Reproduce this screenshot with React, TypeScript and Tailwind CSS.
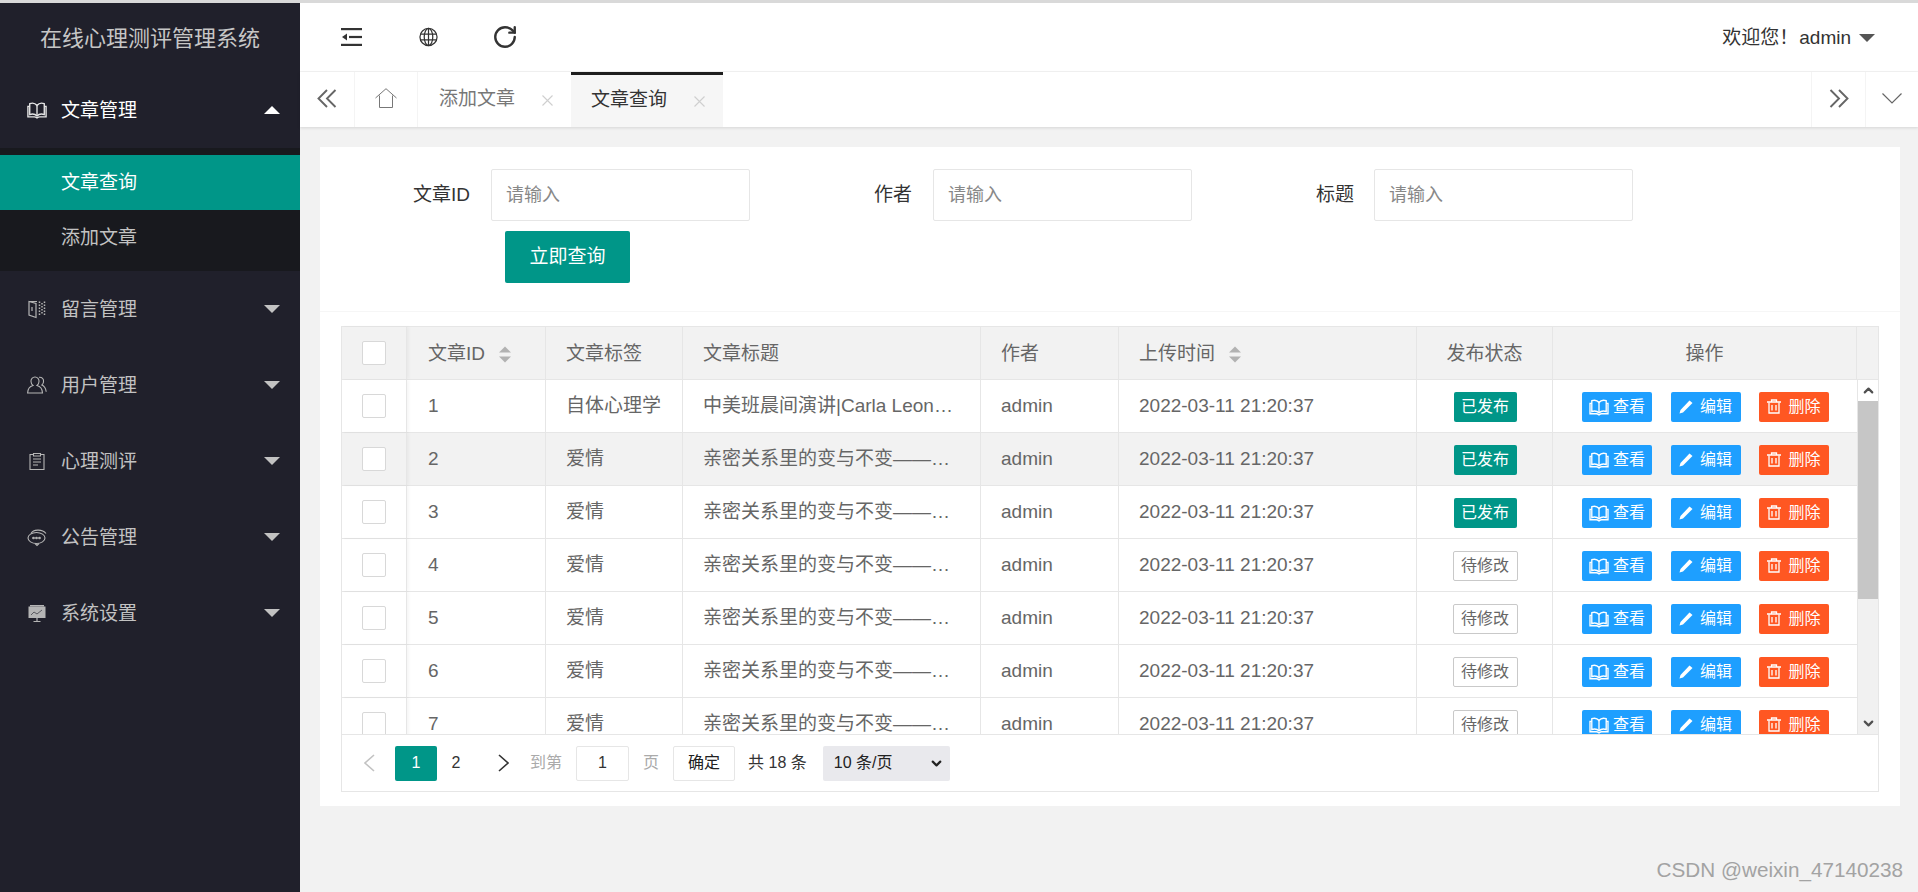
import React from "react";
import { ChevronDown, ChevronUp, RotateCw } from "lucide-react";

type IC = { className?: string };

const Tri = ({ up, cls }: { up?: boolean; cls: string }) => (
  <svg viewBox="0 0 16 8" className={cls}>
    <polygon points={up ? "8,0 16,8 0,8" : "0,0 16,0 8,8"} fill="currentColor" />
  </svg>
);

const Book = ({ className }: IC) => (
  <svg viewBox="0 0 22 20" fill="none" stroke="currentColor" strokeWidth="1.5" className={className}>
    <path d="M11 5C9 2.5 6 2 3 3v12c3-1 6-.5 8 1.5 2-2 5-2.5 8-1.5V3c-3-1-6-.5-8 2z" />
    <path d="M11 5v11.5" />
    <path d="M3 6H1v11.5h7c1 0 2 .5 3 1.2 1-.7 2-1.2 3-1.2h7V6h-2" />
  </svg>
);

const Chat = ({ className }: IC) => (
  <svg viewBox="0 0 20 20" fill="none" stroke="currentColor" strokeWidth="1.1" className={className}>
    <path d="M4 6.5C6 2.5 15 1.5 19 6.5" />
    <ellipse cx="9.5" cy="11" rx="8.5" ry="5.5" />
    <path d="M8 16.5l2 2 2-2" />
    <circle cx="6.5" cy="11" r=".8" fill="currentColor" />
    <circle cx="9.5" cy="11" r=".8" fill="currentColor" />
    <circle cx="12.5" cy="11" r=".8" fill="currentColor" />
  </svg>
);

const Door = ({ className }: IC) => (
  <svg viewBox="0 0 20 20" fill="none" stroke="currentColor" strokeWidth="1.2" className={className}>
    <path d="M2 2.5l7 2v14l-7-2.5z" />
    <path d="M2 2.5h8M5 8v4" />
    <path d="M12.5 2.5v14M15 4v11M17.5 2.5v14" strokeDasharray="1.6 1.4" strokeWidth="1.5" />
  </svg>
);

const UserIcon = ({ className }: IC) => (
  <svg viewBox="0 0 20 20" fill="none" stroke="currentColor" strokeWidth="1.1" className={className}>
    <path d="M8 2a4 4 0 0 1 4 4.5c0 1.8-.8 3-2 4 3.3.8 5.3 3 5.5 7.5H.6c.2-4.500 2.200-6.700 5.400-7.500-1.200-1-2-2.200-2-4A4 4 0 0 1 8 2z" />
    <path d="M12 2.300c3-.3 5 1.700 4.500 4.700-.2 1.300-.8 2.300-1.600 3 2.400 1 3.900 3.300 4.300 6.800" />
  </svg>
);

const Clip = ({ className }: IC) => (
  <svg viewBox="0 0 20 20" fill="none" stroke="currentColor" strokeWidth="1.1" className={className}>
    <path d="M6.500 3.500H3v15h14v-15h-3.500" />
    <path d="M6.500 2.500h7v2.500h-7z" />
    <path d="M6 8h8M6 11h8M6 14h5" />
  </svg>
);

const Board = ({ className }: IC) => (
  <svg viewBox="0 0 20 20" className={className}>
    <rect x="1.500" y="3.500" width="17" height="11.500" fill="currentColor" />
    <rect x="3" y="2" width="14" height="1.500" fill="currentColor" />
    <path d="M4 12l3-3 3 2 5-4" fill="none" stroke="#5a5a60" strokeWidth="1" />
    <path d="M10 15v3M6.500 18.500h7" stroke="currentColor" strokeWidth="1.200" />
  </svg>
);

const Double = ({ right, cls }: { right?: boolean; cls: string }) => (
  <svg viewBox="0 0 20 19" fill="none" stroke="currentColor" strokeWidth="1.900" className={cls}>
    {right ? <path d="M1.500 1l8.500 8.500L1.500 18M10 1l8.500 8.500L10 18" /> : <path d="M18.500 1L10 9.500 18.500 18M10 1L1.500 9.500 10 18" />}
  </svg>
);

const Single = ({ right, cls }: { right?: boolean; cls: string }) => (
  <svg viewBox="0 0 11 18" fill="none" stroke="currentColor" strokeWidth="1.600" className={cls}>
    {right ? <path d="M1 1l9 8-9 8" /> : <path d="M10 1L1 9l9 8" />}
  </svg>
);

const Cross = () => (
  <svg viewBox="0 0 11 11" fill="none" stroke="#cfcfcf" strokeWidth="1.100" className="w-[11px] h-[11px]">
    <path d="M.5.5l10 10M10.500.5l-10 10" />
  </svg>
);

const Pen = () => (
  <svg viewBox="0 0 14 14" className="w-[14px] h-[14px]" fill="currentColor">
    <polygon points="10.500,0.500 13.500,3 4,12.500 0.500,13.500 1.500,10" />
  </svg>
);

const Trash = () => (
  <svg viewBox="0 0 14 15" fill="none" stroke="currentColor" strokeWidth="1.300" className="w-[14px] h-[15px]">
    <path d="M0 3h14M4.500 3V1h5v2" />
    <path d="M2 3.500V14h10V3.500" />
    <path d="M5 6v5.500M9 6v5.500" />
  </svg>
);

const menus = [
  { t: "留言管理", I: Door },
  { t: "用户管理", I: UserIcon },
  { t: "心理测评", I: Clip },
  { t: "公告管理", I: Chat },
  { t: "系统设置", I: Board },
];

const love = "亲密关系里的变与不变——…";
const rows = [
  ["1", "自体心理学", "中美班晨间演讲|Carla Leon…", true],
  ["2", "爱情", love, true],
  ["3", "爱情", love, true],
  ["4", "爱情", love, false],
  ["5", "爱情", love, false],
  ["6", "爱情", love, false],
  ["7", "爱情", love, false],
] as [string, string, string, boolean][];

const Sort = () => (
  <span className="ml-[14px] flex flex-col gap-[3px] text-[#b2b2b2]">
    <Tri up cls="w-[12px] h-[7px]" />
    <Tri cls="w-[12px] h-[7px]" />
  </span>
);

const Check = () => <span className="block w-[24px] h-[24px] bg-white border border-[#d8d8d8] rounded-[2px]" />;

const inputCls = "w-[259px] h-[52px] border border-[#e6e6e6] rounded-[2px] pl-[14px] flex items-center text-[18px] text-[#888]";

export default function App() {
  return (
    <div
      className="relative w-full h-screen overflow-hidden flex flex-col bg-[#f2f2f2] border-t-[3px] border-[#d9d9d9] text-[19px] text-[#666]"
      style={{ fontFamily: '"Liberation Sans","Noto Sans CJK SC",sans-serif' }}
    >
      <div className="flex flex-1 min-h-0">
        {/* Sidebar */}
        <aside className="w-[300px] shrink-0 bg-[#20202b] text-[#c2c2c2]">
          <div className="h-[69px] pt-[2px] flex items-center justify-center text-[22px] text-[#c6c6c6]">在线心理测评管理系统</div>
          <div className="h-[76px] flex items-center text-white">
            <Book className="ml-[27px] w-[20px] h-[20px] text-[#e6e6e6]" />
            <span className="ml-[14px] pt-[2px] flex-1">文章管理</span>
            <Tri up cls="w-[16px] h-[8px] mr-[20px] text-white" />
          </div>
          <div className="bg-[#18191e] pt-[7px] pb-[6px]">
            <div className="h-[55px] pt-[2px] bg-[#009688] text-white flex items-center pl-[61px]">文章查询</div>
            <div className="h-[55px] pt-[2px] flex items-center pl-[61px]">添加文章</div>
          </div>
          {menus.map(({ t, I }) => (
            <div key={t} className="h-[76px] flex items-center">
              <I className="ml-[27px] w-[20px] h-[20px] text-[#b5b5b5]" />
              <span className="ml-[14px] pt-[2px] flex-1">{t}</span>
              <Tri cls="w-[16px] h-[8px] mr-[20px] text-[#c2c2c2]" />
            </div>
          ))}
        </aside>

        {/* Main */}
        <main className="flex-1 min-w-0 flex flex-col">
          <header className="h-[69px] bg-white border-b border-[#f4f4f4] flex items-center text-[#333]">
            <svg viewBox="0 0 21 18" className="ml-[41px] w-[21px] h-[18px]" fill="#333">
              <rect x="0" y="0" width="21" height="2.200" />
              <rect x="8" y="7.900" width="13" height="2.200" />
              <polygon points="1,9 6,5.500 6,12.500" />
              <rect x="0" y="15.800" width="21" height="2.200" />
            </svg>
            <svg viewBox="0 0 20 20" className="ml-[57px] w-[19px] h-[20px]" fill="none" stroke="#333" strokeWidth="1.300">
              <circle cx="10" cy="10" r="9" />
              <ellipse cx="10" cy="10" rx="4.500" ry="9" />
              <path d="M10 1v18M1.500 7h17M1.500 13h17" />
            </svg>
            <RotateCw className="ml-[54px] w-[26px] h-[26px]" strokeWidth={2.2} />
            <div className="ml-auto flex items-center mr-[43px] pt-[2px]">
              <span>欢迎您！</span>
              <span className="ml-[1px]">admin</span>
              <Tri cls="ml-[8px] w-[16px] h-[8px] text-[#555]" />
            </div>
          </header>
          <nav className="h-[55px] bg-white shadow-[0_1px_3px_rgba(0,0,0,0.12)] flex items-stretch">
            <div className="w-[55px] border-r border-[#f4f4f4] flex items-center justify-center text-[#666] pb-[2px]">
              <Double cls="w-[20px] h-[19px]" />
            </div>
            <div className="w-[63px] border-r border-[#f4f4f4] flex items-center justify-center text-[#777] pb-[3px]">
              <svg viewBox="0 0 22 20" fill="none" stroke="currentColor" strokeWidth="1" className="w-[22px] h-[20px]">
                <path d="M.5 10L11 .7 21.500 10" />
                <path d="M4.500 7.500V19.500h13V7.500" />
              </svg>
            </div>
            <div className="w-[153px] flex items-center pl-[21px] text-[#777]">
              <span>添加文章</span>
              <span className="ml-[27px] mt-[1px]"><Cross /></span>
            </div>
            <div className="w-[152px] flex items-center pl-[20px] bg-[#f6f6f6] border-t-[3px] border-[#1e1e1e] text-[#333]">
              <span className="-mt-[2px]">文章查询</span>
              <span className="ml-[27px]"><Cross /></span>
            </div>
            <div className="ml-auto w-[54px] border-l border-[#f4f4f4] flex items-center justify-center text-[#666] pb-[2px]">
              <Double right cls="w-[20px] h-[19px]" />
            </div>
            <div className="w-[53px] border-l border-[#f4f4f4] flex items-center justify-center text-[#666] pb-[2px]">
              <svg viewBox="0 0 20 11" fill="none" stroke="currentColor" strokeWidth="1.200" className="w-[20px] h-[11px]">
                <path d="M.5.5L10 10 19.500.5" />
              </svg>
            </div>
          </nav>

          <div className="pt-[20px] pl-[20px] pr-[18px]">
            <section className="bg-white h-[659px] flex flex-col">
              <div className="h-[165px] border-b border-[#f6f6f6] pt-[22px]">
                <div className="flex items-center text-[#333]">
                  <label className="w-[150px] text-right mr-[21px]">文章ID</label>
                  <div className={inputCls}>请输入</div>
                  <label className="w-[162px] text-right mr-[21px]">作者</label>
                  <div className={inputCls}>请输入</div>
                  <label className="w-[162px] text-right mr-[20px]">标题</label>
                  <div className={inputCls}>请输入</div>
                </div>
                <button className="ml-[185px] mt-[10px] w-[125px] h-[52px] bg-[#009688] rounded-[2px] text-white text-[19px]">立即查询</button>
              </div>

              <div className="ml-[21px] mt-[14px] w-[1538px] h-[466px] border border-[#e6e6e6] flex flex-col">
                {/* header */}
                <div className="h-[53px] pt-0 shrink-0 flex bg-[#f2f2f2] border-b border-[#e6e6e6]">
                  <div className="w-[65px] border-r border-[#e6e6e6] flex items-center justify-center shadow-[2px_0_3px_rgba(0,0,0,0.04)]"><Check /></div>
                  <div className="w-[139px] border-r border-[#e6e6e6] flex items-center pl-[21px] pt-[2px]">文章ID<Sort /></div>
                  <div className="w-[137px] border-r border-[#e6e6e6] flex items-center pl-[20px] pt-[2px]">文章标签</div>
                  <div className="w-[298px] border-r border-[#e6e6e6] flex items-center pl-[20px] pt-[2px]">文章标题</div>
                  <div className="w-[138px] border-r border-[#e6e6e6] flex items-center pl-[20px] pt-[2px]">作者</div>
                  <div className="w-[298px] border-r border-[#e6e6e6] flex items-center pl-[20px] pt-[2px]">上传时间<Sort /></div>
                  <div className="w-[136px] border-r border-[#e6e6e6] flex items-center justify-center pt-[2px]">发布状态</div>
                  <div className="w-[304px] border-r border-[#e6e6e6] flex items-center justify-center pt-[2px]">操作</div>
                  <div className="flex-1" />
                </div>
                {/* body */}
                <div className="h-[354px] shrink-0 flex overflow-hidden">
                  <div className="w-[1515px] shrink-0">
                    {rows.map(([id, tag, title, pub], i) => (
                      <div key={id} className={`h-[53px] flex border-b border-[#e6e6e6] ${i === 1 ? "bg-[#f2f2f2]" : "bg-white"}`}>
                        <div className="w-[65px] border-r border-[#e6e6e6] flex items-center justify-center shadow-[2px_0_3px_rgba(0,0,0,0.04)]"><Check /></div>
                        <div className="w-[139px] border-r border-[#e6e6e6] flex items-center pl-[21px]">{id}</div>
                        <div className="w-[137px] border-r border-[#e6e6e6] flex items-center pl-[20px] whitespace-nowrap">{tag}</div>
                        <div className="w-[298px] border-r border-[#e6e6e6] flex items-center pl-[20px] whitespace-nowrap">{title}</div>
                        <div className="w-[138px] border-r border-[#e6e6e6] flex items-center pl-[20px]">admin</div>
                        <div className="w-[298px] border-r border-[#e6e6e6] flex items-center pl-[20px] whitespace-nowrap">2022-03-11 21:20:37</div>
                        <div className="w-[136px] border-r border-[#e6e6e6] pt-[1px] pl-[1px] flex items-center justify-center">
                          {pub ? (
                            <span className="w-[63px] h-[30px] bg-[#009688] text-white text-[16px] rounded-[2px] flex items-center justify-center">已发布</span>
                          ) : (
                            <span className="w-[65px] h-[30px] bg-white border border-[#c9c9c9] text-[#666] text-[16px] rounded-[2px] flex items-center justify-center">待修改</span>
                          )}
                        </div>
                        <div className="w-[303px] flex items-center pt-[1px] pl-[29px] gap-[18.5px] text-[16px] text-white">
                          <span className="w-[70px] h-[30px] bg-[#1e9fff] rounded-[2px] flex items-center justify-center gap-[4px]"><span className="block w-[20px] h-[18px]"><Book className="w-[20px] h-[18px]" /></span><span className="pt-[1px]">查看</span></span>
                          <span className="w-[70px] h-[30px] bg-[#1e9fff] rounded-[2px] flex items-center justify-center gap-[7px]"><Pen /><span className="pt-[1px]">编辑</span></span>
                          <span className="w-[70px] h-[30px] bg-[#ff5722] rounded-[2px] flex items-center justify-center gap-[7px]"><Trash /><span className="pt-[1px]">删除</span></span>
                        </div>
                      </div>
                    ))}
                  </div>
                  <div className="flex-1 bg-[#f1f1f1] flex flex-col border-l border-[#e6e6e6]">
                    <div className="h-[21px] shrink-0 bg-white flex items-center justify-center text-[#505050]"><ChevronUp className="w-[15px] h-[15px]" strokeWidth={3.5} /></div>
                    <div className="h-[198px] shrink-0 bg-[#c6c6c6]" />
                    <div className="flex-1" />
                    <div className="h-[21px] shrink-0 flex items-center justify-center text-[#505050]"><ChevronDown className="w-[15px] h-[15px]" strokeWidth={3.5} /></div>
                  </div>
                </div>
                {/* pager */}
                <div className="flex-1 border-t border-[#e6e6e6] flex items-center text-[16px]">
                  <Single cls="ml-[22px] w-[11px] h-[18px] text-[#c2c2c2]" />
                  <span className="ml-[20px] w-[42px] h-[35px] bg-[#009688] text-white rounded-[2px] flex items-center justify-center">1</span>
                  <span className="w-[38px] text-center text-[#333]">2</span>
                  <Single right cls="ml-[23px] w-[11px] h-[18px] text-[#333]" />
                  <span className="ml-[21px] text-[#aaa]">到第</span>
                  <span className="ml-[14px] w-[53px] h-[35px] border border-[#e6e6e6] rounded-[2px] flex items-center justify-center text-[#333]">1</span>
                  <span className="ml-[14px] text-[#aaa]">页</span>
                  <span className="ml-[14px] w-[62px] h-[35px] border border-[#e6e6e6] rounded-[2px] flex items-center justify-center text-[#222]">确定</span>
                  <span className="ml-[13px] text-[#333]">共 18 条</span>
                  <span className="ml-[16px] w-[127px] h-[35px] bg-[#e9e9ed] rounded-[2px] flex items-center pl-[11px] text-[#222]">
                    10 条/页
                    <ChevronDown className="ml-auto mr-[6px] w-[15px] h-[15px] text-[#222]" strokeWidth={3.5} />
                  </span>
                </div>
              </div>
            </section>
          </div>
        </main>
      </div>
      <span className="absolute right-[15px] bottom-[7px] text-[20.7px] text-[#a3a3a3]">CSDN @weixin_47140238</span>
    </div>
  );
}
